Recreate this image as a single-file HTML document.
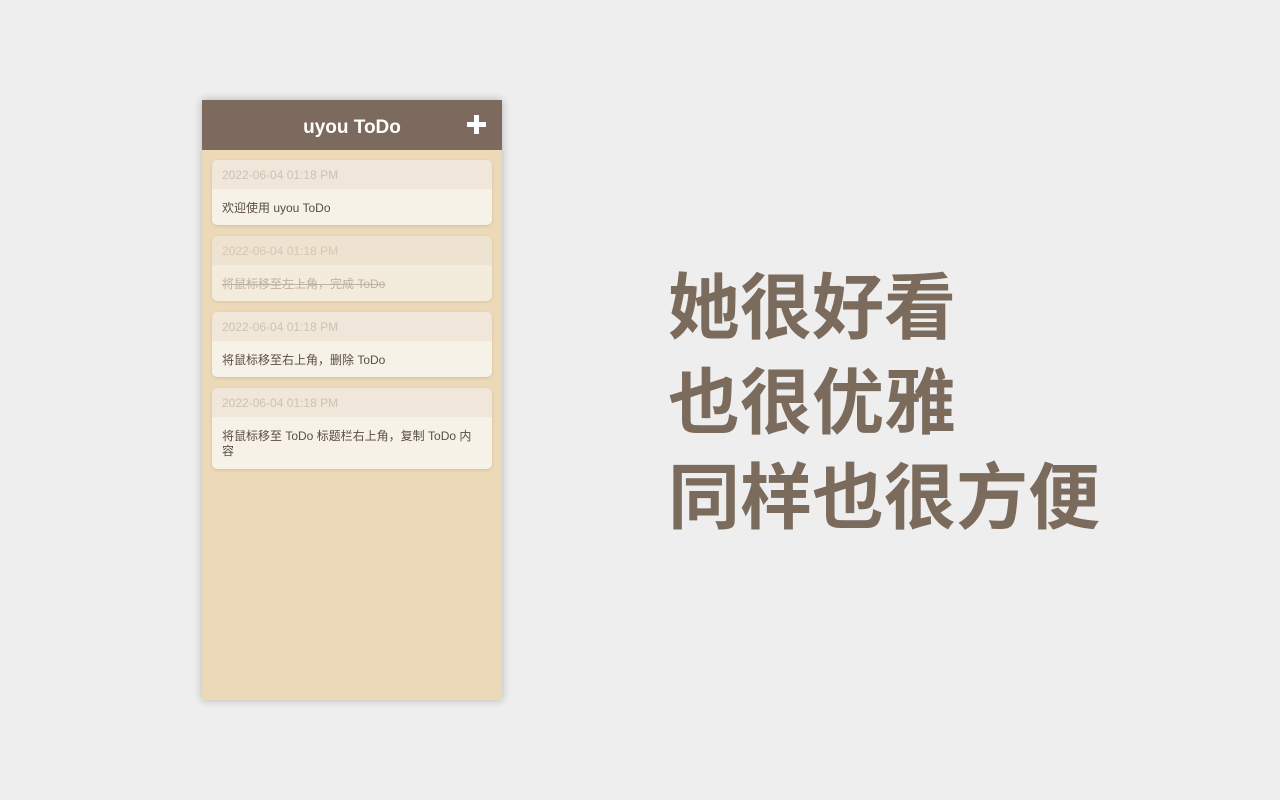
<!DOCTYPE html>
<html><head><meta charset="utf-8"><style>
body{margin:0;width:1280px;height:800px;background:#eeeeee;position:relative;overflow:hidden;font-family:"Liberation Sans","Noto Sans CJK SC",sans-serif;}
.panel{position:absolute;left:202px;top:100px;width:300px;height:600px;background:#ebd9b8;box-shadow:0 0 8px rgba(0,0,0,.25);}
.hdr{height:50px;background:#7b6a5d;color:#fff;font-weight:bold;font-size:19px;text-align:center;line-height:56px;position:relative;}
.plus{position:absolute;right:16px;top:15px;width:19px;height:19px;}
.plus:before{content:"";position:absolute;left:7px;top:0;width:5px;height:19px;background:#fff;}
.plus:after{content:"";position:absolute;left:0;top:7px;width:19px;height:5px;background:#fff;}
.card{position:absolute;left:10px;width:280px;border-radius:5px;overflow:hidden;box-shadow:0 1px 3px rgba(0,0,0,.12);background:#f6f2e7;}
.ch{height:29px;background:#f0e6d9;color:#cfc2b2;font-size:12px;line-height:31px;padding-left:10px;}
.cb{padding:12px 10px 9px;font-size:12px;color:#5a4d44;line-height:15px;}
.big{position:absolute;left:668px;top:254px;font-size:72px;font-weight:bold;color:#7b6b5d;line-height:95px;font-family:"Noto Sans CJK SC",sans-serif;}
</style></head><body>
<div class="panel">
<div class="hdr">uyou ToDo<div class="plus"></div></div>
<div class="card" style="top:60px"><div class="ch">2022-06-04 01:18 PM</div><div class="cb">欢迎使用 uyou ToDo</div></div>
<div class="card" style="top:136px;opacity:.75"><div class="ch">2022-06-04 01:18 PM</div><div class="cb" style="text-decoration:line-through;color:#b0a498">将鼠标移至左上角，完成 ToDo</div></div>
<div class="card" style="top:212px"><div class="ch">2022-06-04 01:18 PM</div><div class="cb">将鼠标移至右上角，删除 ToDo</div></div>
<div class="card" style="top:288px"><div class="ch">2022-06-04 01:18 PM</div><div class="cb" style="padding-top:12px;padding-bottom:10px">将鼠标移至 ToDo 标题栏右上角，复制 ToDo 内容</div></div>
</div>
<div class="big">她很好看<br>也很优雅<br>同样也很方便</div>
</body></html>
